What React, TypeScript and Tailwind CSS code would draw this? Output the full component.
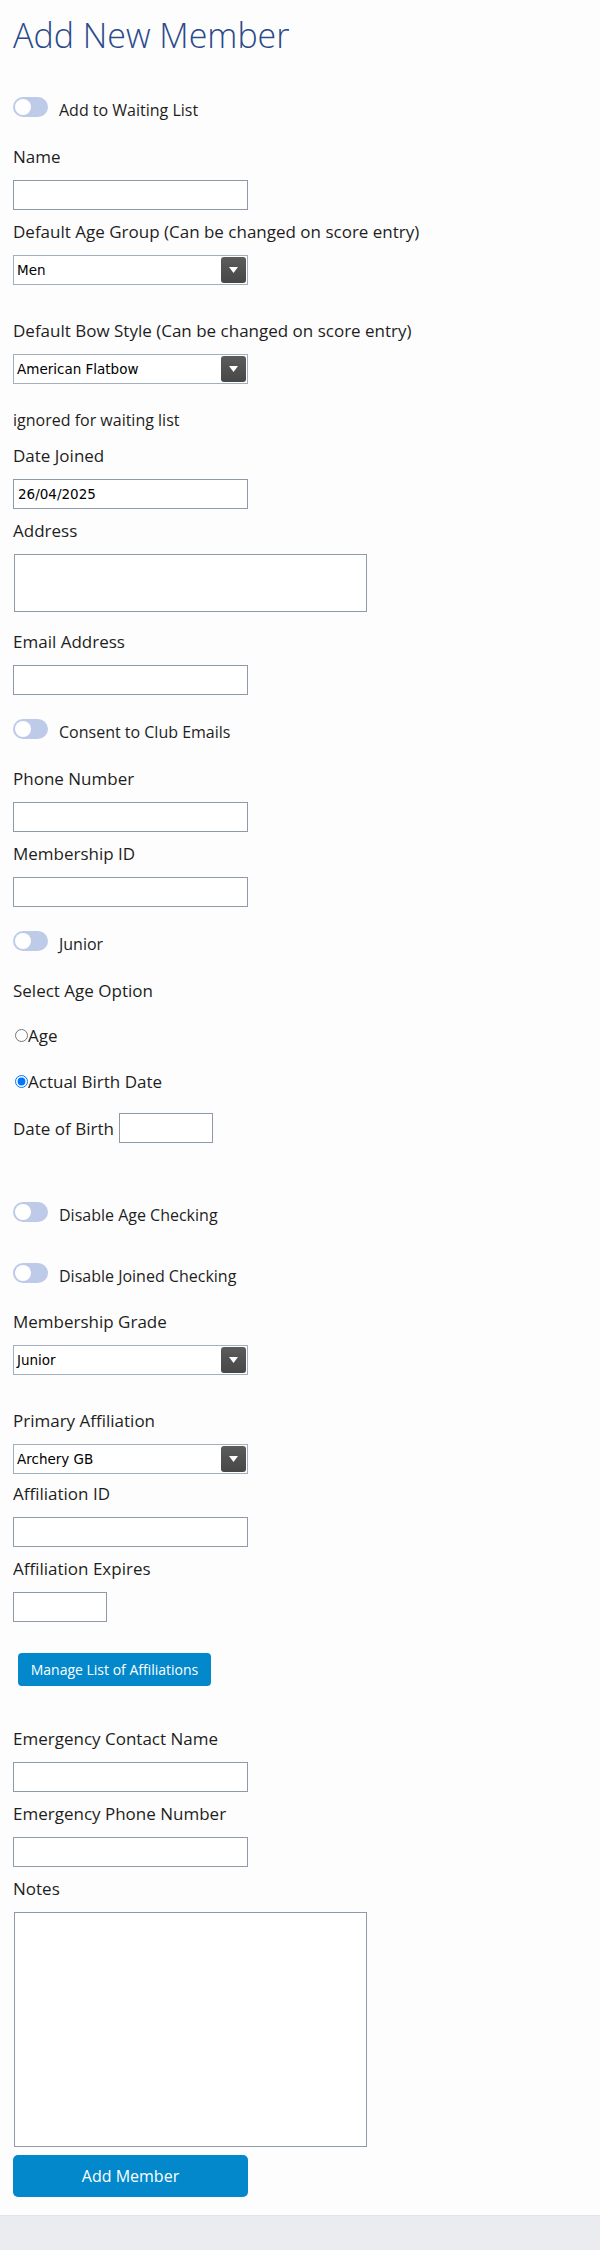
const sans = "font-['Open_Sans',sans-serif]";

function Toggle({ label, className = "" }: { label: string; className?: string }) {
  return (
    <div className={`flex items-start ${className}`}>
      <span className="flex h-[20px] w-[35px] shrink-0 items-center rounded-full bg-[#bdcbe8] px-[2px]">
        <span className="h-[16px] w-[16px] rounded-full bg-white" />
      </span>
      <span className="ml-[11px] mt-[3px] text-[16px] leading-[20px] text-[#1e1e1e]">{label}</span>
    </div>
  );
}

function Label({ children }: { children: React.ReactNode }) {
  return <div className="mb-[12px] text-[17px] leading-[23px] text-[#1e1e1e]">{children}</div>;
}

function TextInput({ value = "", width = "w-[235px]" }: { value?: string; width?: string }) {
  return (
    <input
      readOnly
      value={value}
      className={`${width} h-[30px] border border-[#8e9aab] bg-white px-[4px] font-['DejaVu_Sans',sans-serif] text-[13.5px] text-black outline-none`}
    />
  );
}

function Select({ value }: { value: string }) {
  return (
    <div className="flex h-[30px] w-[235px] items-center justify-between border border-[#a3afbf] bg-white pl-[3px] pr-[1px]">
      <span className="font-['DejaVu_Sans',sans-serif] text-[13.5px] text-black">{value}</span>
      <span className="flex h-[26px] w-[25px] items-center justify-center rounded-[3px] bg-gradient-to-b from-[#5c5c5c] to-[#474747]">
        <svg width="9" height="6" viewBox="0 0 9 6">
          <path d="M0 0h9L4.5 6z" fill="#fff" />
        </svg>
      </span>
    </div>
  );
}

function Field({
  label,
  children,
  className = "",
}: {
  label: string;
  children: React.ReactNode;
  className?: string;
}) {
  return (
    <div className={className}>
      <Label>{label}</Label>
      {children}
    </div>
  );
}

export default function App() {
  return (
    <div className={`${sans} bg-[#fdfdfd]`}>
      <form className="px-[13px] pb-[18px] pt-[15px]" onSubmit={(e) => e.preventDefault()}>
        <h1 className="text-[34px] font-light leading-[40px] text-[#2a4a8b]">Add New Member</h1>

        <Toggle label="Add to Waiting List" className="mt-[42px]" />

        <Field label="Name" className="mt-[25px]">
          <TextInput />
        </Field>

        <Field label="Default Age Group (Can be changed on score entry)" className="mt-[10px]">
          <Select value="Men" />
        </Field>

        <Field label="Default Bow Style (Can be changed on score entry)" className="mt-[34px]">
          <Select value="American Flatbow" />
        </Field>

        <p className="mt-[25px] text-[16px] leading-[23px] text-[#1e1e1e]">ignored for waiting list</p>

        <Field label="Date Joined" className="mt-[12px]">
          <TextInput value="26/04/2025" />
        </Field>

        <Field label="Address" className="mt-[10px]">
          <textarea
            readOnly
            className="ml-[1px] block h-[58px] w-[353px] resize-none border border-[#8e9aab] bg-white outline-none"
          />
        </Field>

        <Field label="Email Address" className="mt-[18px]">
          <TextInput />
        </Field>

        <Toggle label="Consent to Club Emails" className="mt-[24px]" />

        <Field label="Phone Number" className="mt-[25px]">
          <TextInput />
        </Field>

        <Field label="Membership ID" className="mt-[10px]">
          <TextInput />
        </Field>

        <Toggle label="Junior" className="mt-[24px]" />

        <div className="mt-[25px] text-[17px] leading-[23px] text-[#1e1e1e]">Select Age Option</div>

        <label className="mt-[22px] block text-[17px] leading-[23px] text-[#1e1e1e]">
          <input type="radio" name="ageopt" className="ml-[2px] h-[13px] w-[13px]" />
          Age
        </label>
        <label className="mt-[23px] block text-[17px] leading-[23px] text-[#1e1e1e]">
          <input type="radio" name="ageopt" defaultChecked className="ml-[2px] h-[13px] w-[13px]" />
          Actual Birth Date
        </label>

        <div className="mt-[20px] flex items-center gap-[5px] text-[17px] leading-[23px] text-[#1e1e1e]">
          <span>Date of Birth</span>
          <TextInput width="w-[94px]" />
        </div>

        <Toggle label="Disable Age Checking" className="mt-[59px]" />
        <Toggle label="Disable Joined Checking" className="mt-[38px]" />

        <Field label="Membership Grade" className="mt-[24px]">
          <Select value="Junior" />
        </Field>

        <Field label="Primary Affiliation" className="mt-[34px]">
          <Select value="Archery GB" />
        </Field>

        <Field label="Affiliation ID" className="mt-[8px]">
          <TextInput />
        </Field>

        <Field label="Affiliation Expires" className="mt-[10px]">
          <TextInput width="w-[94px]" />
        </Field>

        <button
          type="button"
          className="ml-[5px] mt-[31px] block h-[33px] w-[193px] rounded-[4px] bg-[#0288cb] text-[14px] text-white"
        >
          Manage List of Affiliations
        </button>

        <Field label="Emergency Contact Name" className="mt-[41px]">
          <TextInput />
        </Field>

        <Field label="Emergency Phone Number" className="mt-[10px]">
          <TextInput />
        </Field>

        <Field label="Notes" className="mt-[10px]">
          <textarea
            readOnly
            className="ml-[1px] block h-[235px] w-[353px] resize-none border border-[#8e9aab] bg-white outline-none"
          />
        </Field>

        <button
          type="submit"
          className="mt-[8px] block h-[42px] w-[235px] rounded-[5px] bg-[#0288cb] text-[16px] text-white"
        >
          Add Member
        </button>
      </form>
      <footer className="h-[40px] border-t border-[#e2e4e8] bg-[#ebecf0]" />
    </div>
  );
}
